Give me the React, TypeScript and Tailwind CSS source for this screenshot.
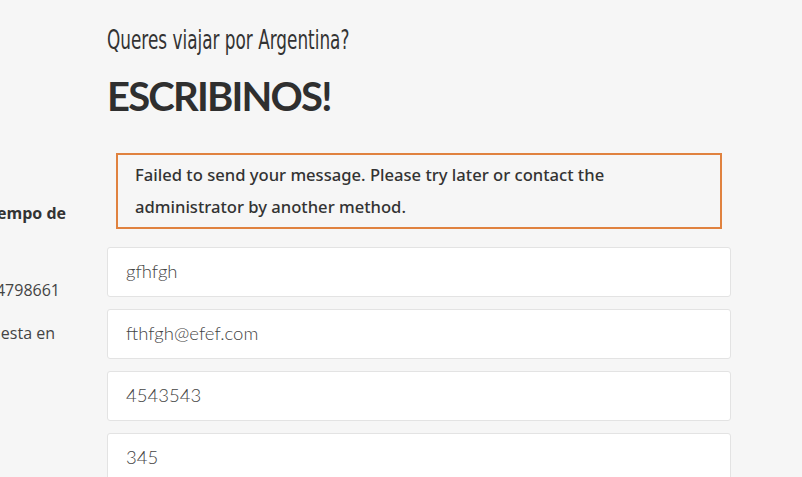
export default function App() {
  const fields = ["gfhfgh", "fthfgh@efef.com", "4543543", "345"];

  return (
    <div className="w-[802px] h-[477px] overflow-hidden bg-[#f6f6f6] text-[#333]">
      <div className="flex">
        {/* left info column, cut by the viewport */}
        <div className="w-[107px] shrink-0 overflow-hidden pt-[200px] font-['Open_Sans',sans-serif] text-[16px]">
          <div className="flex justify-end w-[66px] h-[26px] items-center">
            <span className="whitespace-nowrap font-bold text-[#333]">Tiempo de</span>
          </div>
          <div className="flex justify-end w-[60px] h-[26px] items-center mt-[51px]">
            <span className="whitespace-nowrap text-[#444]">+54 9 11 4798661</span>
          </div>
          <div className="flex justify-end w-[55px] h-[26px] items-center mt-[17px]">
            <span className="whitespace-nowrap text-[#444]">Respuesta en</span>
          </div>
        </div>

        <div className="w-[624px] shrink-0">
          <h3 className="pt-[25px] h-[55px] text-[27px] leading-[30px] font-medium text-[#333] font-['DejaVu_Sans',sans-serif]">
            <span className="inline-block whitespace-nowrap origin-left scale-x-[0.625]">
              Queres viajar por Argentina?
            </span>
          </h3>
          <h2 className="mt-[16px] text-[40px] leading-[50px] font-bold text-[#2f2f2f] font-['Lato',sans-serif] tracking-[-1.8px]">
            ESCRIBINOS!
          </h2>

          <div className="mt-[32px] ml-[9px] w-[606px] border-2 border-[#e0823f] pl-[17px] py-[4px] text-[16.6px] leading-[32px] font-medium text-[#333] font-['Noto_Sans',sans-serif]">
            Failed to send your message. Please try later or contact the
            <br />
            administrator by another method.
          </div>

          <div className="mt-[18px] flex flex-col gap-[12px]">
            {fields.map((v) => (
              <div
                key={v}
                className="h-[50px] bg-white border border-[#e3e3e3] rounded-[3px] flex items-center pl-[18px] text-[18.5px] font-light text-[#444] font-['Lato',sans-serif]"
              >
                {v}
              </div>
            ))}
          </div>
        </div>
      </div>
    </div>
  );
}
